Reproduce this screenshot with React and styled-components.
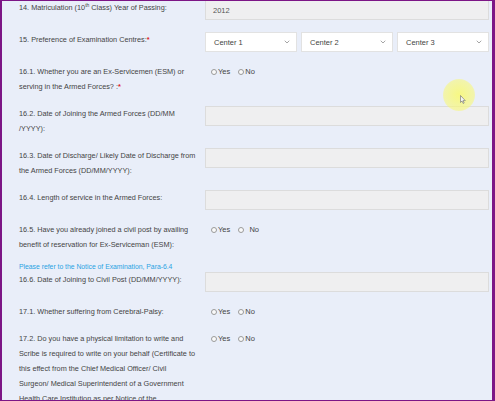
import React from 'react';
import styled, { createGlobalStyle } from 'styled-components';
import { ChevronDown } from 'lucide-react';

const GlobalStyle = createGlobalStyle`
  html, body {
    margin: 0;
    padding: 0;
    background: #e9eef9;
  }
  * {
    box-sizing: border-box;
  }
`;

const Frame = styled.div`
  position: relative;
  width: 495px;
  height: 401px;
  overflow: hidden;
  background: #e9eef9;
  font-family: "Liberation Sans", Arial, sans-serif;
  color: #474747;

  &::after {
    content: '';
    position: absolute;
    inset: 0;
    border-style: solid;
    border-color: #7c1686;
    border-width: 1px 3px 1px 2px;
    pointer-events: none;
  }
`;

const Form = styled.div`
  margin-top: -6px;
  padding: 0 6px 0 19px;
`;

const Row = styled.div`
  display: grid;
  grid-template-columns: 181px 1fr;
  column-gap: 5px;
  align-items: start;
  padding: ${(p) => (p.$tight ? '0' : '6px')} 0 6px;
`;

const Label = styled.div`
  font-size: 7.3px;
  line-height: 15px;
  color: #444;

  sup {
    font-size: 5px;
    line-height: 0;
  }
`;

const Req = styled.span`
  color: #e01b1b;
  font-weight: bold;
`;

const TextBox = styled.div`
  height: 20px;
  background: #efeff0;
  border: 1px solid #dcdcdc;
  padding: 0 7px;
  display: flex;
  align-items: center;
  font-size: 7.5px;
  color: #555;
`;

const SelectGroup = styled.div`
  display: grid;
  grid-template-columns: repeat(3, 1fr);
  gap: 4px;
`;

const SelectBox = styled.div`
  height: 20px;
  background: #ffffff;
  border: 1px solid #e2e2e2;
  padding: 0 5px 0 8px;
  display: flex;
  align-items: center;
  justify-content: space-between;
  font-size: 7.5px;
  color: #444;

  svg {
    color: #777;
  }
`;

const RadioGroup = styled.div`
  display: flex;
  align-items: center;
  height: 15px;
  padding-left: 6px;
  gap: 8px;
`;

const RadioOption = styled.label`
  display: flex;
  align-items: center;
  gap: 1px;
  font-size: 7.5px;
  color: #444;
`;

const Circle = styled.span`
  width: 6px;
  height: 6px;
  border-radius: 50%;
  border: 0.8px solid #9a9a9a;
  background: #fafafa;
  margin-top: 1px;
`;

const Note = styled.div`
  font-size: 6.8px;
  line-height: 10px;
  color: #2aa3e3;
  margin: 4px 0 0;
`;

const Highlight = styled.div`
  position: absolute;
  left: 443px;
  top: 79px;
  width: 32px;
  height: 32px;
  border-radius: 50%;
  background: radial-gradient(circle, rgba(250, 250, 110, 0.85) 0%, rgba(248, 248, 120, 0.6) 65%, rgba(248, 248, 140, 0) 100%);
  pointer-events: none;
`;

const Cursor = styled.svg`
  position: absolute;
  left: 460px;
  top: 95px;
  width: 6px;
  height: 9px;
`;

function YesNo({ noSpace }) {
  return (
    <RadioGroup>
      <RadioOption>
        <Circle />
        Yes
      </RadioOption>
      <RadioOption>
        <Circle />
        {noSpace ? '\u00a0\u00a0No' : 'No'}
      </RadioOption>
    </RadioGroup>
  );
}

function Select({ value }) {
  return (
    <SelectBox>
      <span>{value}</span>
      <ChevronDown size={8} strokeWidth={2} />
    </SelectBox>
  );
}

export default function App() {
  return (
    <Frame>
      <GlobalStyle />
      <Form>
        <Row>
          <Label>
            14. Matriculation (10<sup>th</sup> Class) Year of Passing:
          </Label>
          <TextBox>2012</TextBox>
        </Row>

        <Row>
          <Label>
            15. Preference of Examination Centres:<Req>*</Req>
          </Label>
          <SelectGroup>
            <Select value="Center 1" />
            <Select value="Center 2" />
            <Select value="Center 3" />
          </SelectGroup>
        </Row>

        <Row>
          <Label>
            16.1. Whether you are an Ex-Servicemen (ESM) or serving in the Armed Forces? :<Req>*</Req>
          </Label>
          <YesNo />
        </Row>

        <Row>
          <Label>16.2. Date of Joining the Armed Forces (DD/MM /YYYY):</Label>
          <TextBox />
        </Row>

        <Row>
          <Label>16.3. Date of Discharge/ Likely Date of Discharge from the Armed Forces (DD/MM/YYYY):</Label>
          <TextBox />
        </Row>

        <Row>
          <Label>16.4. Length of service in the Armed Forces:</Label>
          <TextBox />
        </Row>

        <Row>
          <Label>16.5. Have you already joined a civil post by availing benefit of reservation for Ex-Serviceman (ESM):</Label>
          <YesNo noSpace />
        </Row>

        <Note>Please refer to the Notice of Examination, Para-6.4</Note>

        <Row $tight>
          <Label>16.6. Date of Joining to Civil Post (DD/MM/YYYY):</Label>
          <TextBox />
        </Row>

        <Row>
          <Label>17.1. Whether suffering from Cerebral-Palsy:</Label>
          <YesNo />
        </Row>

        <Row>
          <Label>
            17.2. Do you have a physical limitation to write and Scribe is required to write on your behalf (Certificate to this effect from the Chief Medical Officer/ Civil
            <br />
            Surgeon/ Medical Superintendent of a Government
            <br />
            Health Care Institution as per Notice of the Examination):
          </Label>
          <YesNo />
        </Row>
      </Form>

      <Highlight />
      <Cursor viewBox="0 0 6 9">
        <path d="M0.5 0.5 L0.5 7.5 L2 6 L3.2 8.5 L4.2 8 L3 5.6 L5.3 5.6 Z" fill="#f4f4f4" stroke="#6b6b6b" strokeWidth="0.6" />
      </Cursor>
    </Frame>
  );
}
